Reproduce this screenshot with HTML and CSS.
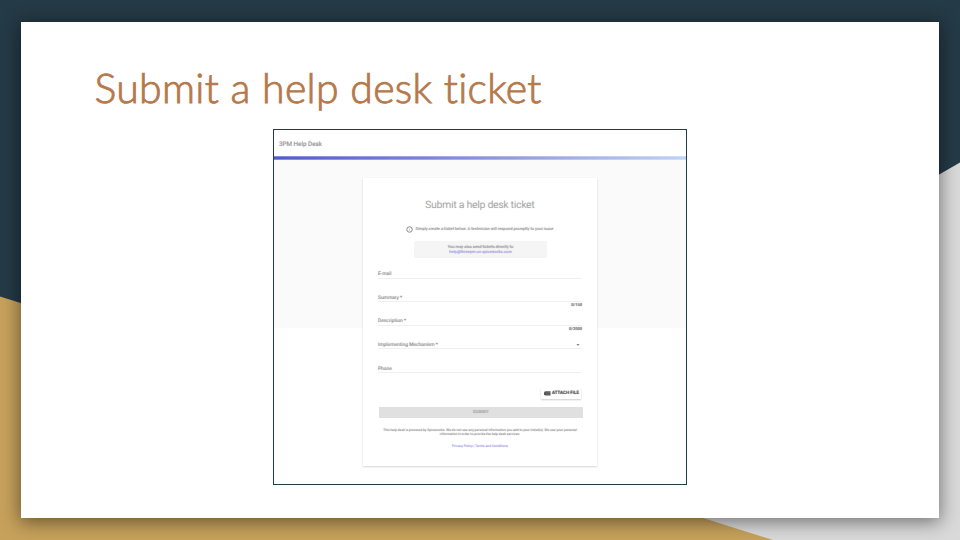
FILE: index.html
```html
<!DOCTYPE html>
<html lang="en">
<head>
<meta charset="utf-8">
<title>Submit a help desk ticket</title>
<link rel="stylesheet" href="styles.css">
</head>
<body>
<main class="slide">
  <svg class="backdrop" viewBox="0 0 960 540" aria-hidden="true">
    <rect width="960" height="540" fill="#243a46"/>
    <path d="M960 162.500 600 370V540H960Z" fill="#d9d9d9"/>
    <path d="M0 296.500 773 540H0Z" fill="#c6a15b"/>
  </svg>
  <section class="paper">
    <h1 class="title"><span>Submit a help desk ticket</span></h1>
    <div class="shot">
      <header class="top"><span>3PM Help Desk</span></header>
      <div class="bar"></div>
      <div class="stage">
        <form class="card">
          <h2 class="heading"><span>Submit a help desk ticket</span></h2>
          <p class="intro">
            <svg class="info" viewBox="0 0 12 12"><circle cx="6" cy="6" r="4.700" fill="none" stroke="#888" stroke-width="1.700"/><path d="M6 5.300V8.500M6 3.300V4.300" stroke="#bbb" stroke-width="1"/></svg>
            <span>Simply create a ticket below. A technician will respond promptly to your issue</span>
          </p>
          <div class="direct"><span>You may also send tickets directly to</span><a>help@threepm.on.spiceworks.com</a></div>
          <div class="field"><label>E-mail</label></div>
          <div class="field"><label>Summary *</label><small>0/150</small></div>
          <div class="field"><label>Description *</label><small>0/2000</small></div>
          <div class="field"><label>Implementing Mechanism *</label><i class="caret"></i></div>
          <div class="field"><label>Phone</label></div>
          <div class="attach"><svg viewBox="0 0 14 10"><path d="M4 .5H13V9H4A3.500 3.500 0 0 1 4 .5Z" fill="#555"/><path d="M4 6.200H10M5 3.300H12" stroke="#888" stroke-width=".8"/></svg><span>ATTACH FILE</span></div>
          <div class="submit"><span>SUBMIT</span></div>
          <p class="legal"><span>This help desk is powered by Spiceworks. We do not use any personal information you add to your ticket(s). We use your personal</span><span>information in order to provide the help desk services.</span></p>
          <p class="links"><a>Privacy Policy | Terms and Conditions</a></p>
        </form>
      </div>
    </div>
  </section>
</main>
</body>
</html>
```
FILE: styles.css
```css
* { box-sizing: border-box; margin: 0; padding: 0; }
body { width: 960px; height: 540px; overflow: hidden; font-family: Roboto, "Liberation Sans", sans-serif; text-rendering: geometricPrecision; }
span, a, label, small { white-space: nowrap; }
.slide { position: relative; width: 960px; height: 540px; padding: 22px 21px; }
.backdrop { position: absolute; inset: 0; width: 960px; height: 540px; }
.paper { position: relative; width: 918px; height: 496px; background: #fff; box-shadow: 0 3px 17px 1px rgba(0, 0, 0, .48); }
.title { height: 107px; padding: 39px 0 0 73.500px; color: #b5794b; font: 300 41px/54px Lato, "Open Sans", sans-serif; -webkit-text-stroke: .9px #b5794b; letter-spacing: .3px; }
.shot { width: 414px; height: 356px; margin-left: 252px; border: 1px solid #243a46; background: #fff; overflow: hidden; }
.top { height: 26px; padding: 8px 0 0 5px; color: #999; font-size: 6.300px; line-height: 13px; text-shadow: 0 0 1px #aaa; }
.bar { height: 4px; margin-top: .3px; background: linear-gradient(rgba(255, 255, 255, .5), transparent 30%, transparent 70%, rgba(255, 255, 255, .5)), linear-gradient(90deg, #535bc8, #9298dc 55%, #bed3f5); }
.stage { height: 324px; padding: 17.700px 0 0 89px; background: linear-gradient(#fafafa 168px, #fff 168px); }
.card { width: 234px; height: 288px; background: #fff; box-shadow: 0 1px 2px rgba(0, 0, 0, .17); color: #999; }
.card span, .card label, .card small, .card a { text-shadow: 0 0 1px currentColor; }
.heading { height: 46px; padding-top: 20px; text-align: center; color: #a2a2a2; font-size: 10px; line-height: 16px; font-weight: 300; }
.heading span { display: inline-block; }
.intro { display: flex; align-items: center; height: 11px; padding-left: 43px; gap: 2.500px; font-size: 4.050px; line-height: 6px; }
.info { width: 7px; height: 7px; }
.direct { display: flex; flex-direction: column; align-items: center; width: 133px; height: 17px; margin: 6px 0 7px 51px; padding-top: 4.300px; background: #f5f5f5; border-radius: 1px; font-size: 4.050px; line-height: 4.500px; }
.direct a, .links a { color: #a39fdf; }
.field { display: flex; justify-content: space-between; height: 23.600px; margin: 0 15px; padding-top: 5.300px; font-size: 4.900px; line-height: 8px; background: linear-gradient(#f0f0f0, #f0f0f0) 0 12.700px / 100% 1px no-repeat; }
.field small { font-size: 4px; line-height: 6px; padding-top: 8.500px; color: #777; font-weight: 500; }
.caret { width: 4px; height: 2.500px; margin: 2.500px 2px 0 0; background: #888; clip-path: polygon(0 0, 100% 0, 50% 100%); }
.attach { display: flex; align-items: center; gap: 1px; width: 40px; height: 11px; margin: 5px 0 8px 178px; padding: 1px 0 0 3px; background: #fff; box-shadow: 0 1px 1.500px rgba(0, 0, 0, .2); color: #555; font-size: 4.500px; line-height: 10px; font-weight: 500; }
.attach span { position: relative; top: .5px; }
.attach svg { width: 7px; height: 5px; }
.submit { width: 204px; height: 11px; margin-left: 16px; background: #e0e0e0; text-align: center; color: #b0b0b0; font-size: 4.400px; line-height: 12px; font-weight: 500; }
.submit span { display: block; }
.legal { display: flex; flex-direction: column; align-items: center; padding-top: 9.700px; font-size: 3.380px; line-height: 4.800px; }
.links { padding-top: 6.500px; text-align: center; font-size: 3.380px; line-height: 5px; }
.links a { display: block; }
```
